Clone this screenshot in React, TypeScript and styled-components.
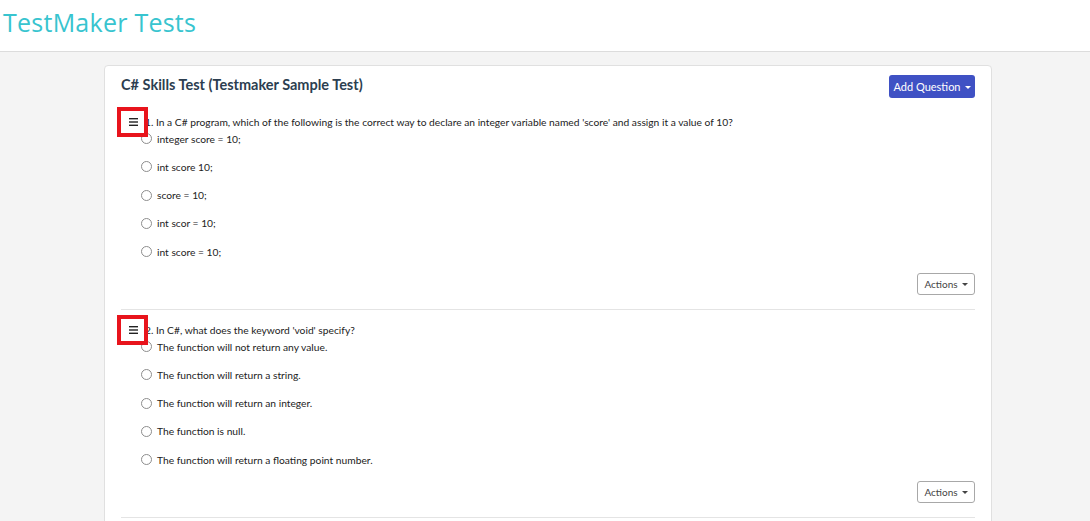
import React from "react";
import styled, { createGlobalStyle } from "styled-components";

const GlobalStyle = createGlobalStyle`
  html, body { margin: 0; padding: 0; }
  body {
    background: #f4f4f4;
    font-family: Lato, "Open Sans", Arial, sans-serif;
    color: #333;
  }
  * { box-sizing: border-box; }
`;

const Header = styled.header`
  height: 52px;
  background: #fff;
  border-bottom: 1px solid #dcdcdc;
  display: flex;
  align-items: center;
  padding-left: 3px;
`;

const Brand = styled.h1`
  margin: -7px 0 0 0;
  font-family: "Open Sans", Arial, sans-serif;
  font-weight: 400;
  font-size: 25px;
  color: #38c4cf;
  letter-spacing: 0.25px;
`;

const Main = styled.main`
  padding: 13px 0 0 104px;
`;

const Card = styled.section`
  width: 888px;
  background: #fff;
  border: 1px solid #e0e0e0;
  border-radius: 4px;
  padding: 9px 16px 20px 16px;
`;

const CardHeader = styled.div`
  display: flex;
  align-items: center;
  justify-content: space-between;
  height: 23px;
  margin-bottom: 15px;
`;

const Title = styled.h2`
  margin: 0 0 5px 0;
  font-size: 14.5px;
  font-weight: 700;
  color: #2c3e50;
`;

const Caret = styled.span`
  display: inline-block;
  width: 0;
  height: 0;
  margin-left: 4px;
  border-top: 3.5px solid currentColor;
  border-left: 3px solid transparent;
  border-right: 3px solid transparent;
  vertical-align: 2px;
`;

const PrimaryButton = styled.button`
  height: 23px;
  width: 86px;
  padding: 0;
  border: none;
  border-radius: 3px;
  background: #3f51c4;
  color: #fff;
  font-family: inherit;
  font-size: 11px;
  cursor: pointer;
`;

const OutlineButton = styled.button`
  height: 22px;
  width: 58px;
  padding: 0;
  border: 1px solid #a8a8a8;
  border-radius: 3px;
  background: #fff;
  color: #444;
  font-family: inherit;
  font-size: 10px;
  cursor: pointer;
`;

const Question = styled.div<{ $first?: boolean }>`
  padding-top: ${(p) => (p.$first ? 0 : 11)}px;
  padding-bottom: 14px;
  border-bottom: 1px solid #e4e4e4;
`;

const QuestionTitle = styled.div`
  display: flex;
  align-items: center;
  height: 17px;
  font-size: 10.25px;
  color: #222;
`;

const Handle = styled.span`
  position: relative;
  width: 24px;
  height: 17px;
  display: flex;
  align-items: center;
  justify-content: center;
  padding-left: 1px;
  flex-shrink: 0;
`;

const Highlight = styled.span`
  position: absolute;
  left: -4px;
  right: -3px;
  top: -6px;
  bottom: -7px;
  border: 4px solid #e8141c;
  pointer-events: none;
`;

const Options = styled.div`
  display: flex;
  flex-direction: column;
  gap: 11.25px;
`;

const Option = styled.label`
  display: flex;
  align-items: center;
  height: 17px;
  padding-left: 20px;
  font-size: 10.25px;
  color: #222;
`;

const Radio = styled.span`
  width: 11px;
  height: 11px;
  border: 1px solid #8d8d8d;
  border-radius: 50%;
  margin-right: 5px;
  flex-shrink: 0;
  background: #fff;
`;

const ActionsRow = styled.div`
  display: flex;
  justify-content: flex-end;
  margin-top: 13px;
`;

const HamburgerIcon = () => (
  <svg width="9" height="8" viewBox="0 0 9 8">
    <rect x="0" y="0" width="9" height="1.4" fill="#222" />
    <rect x="0" y="3.3" width="9" height="1.4" fill="#222" />
    <rect x="0" y="6.6" width="9" height="1.4" fill="#222" />
  </svg>
);

const questions = [
  {
    text:
      "1. In a C# program, which of the following is the correct way to declare an integer variable named 'score' and assign it a value of 10?",
    options: [
      "integer score = 10;",
      "int score 10;",
      "score = 10;",
      "int scor = 10;",
      "int score = 10;",
    ],
  },
  {
    text: "2. In C#, what does the keyword 'void' specify?",
    options: [
      "The function will not return any value.",
      "The function will return a string.",
      "The function will return an integer.",
      "The function is null.",
      "The function will return a floating point number.",
    ],
  },
];

export default function App() {
  return (
    <>
      <GlobalStyle />
      <Header>
        <Brand>TestMaker Tests</Brand>
      </Header>
      <Main>
        <Card>
          <CardHeader>
            <Title>C# Skills Test (Testmaker Sample Test)</Title>
            <PrimaryButton>
              Add Question<Caret />
            </PrimaryButton>
          </CardHeader>
          {questions.map((q, i) => (
            <Question key={i} $first={i === 0}>
              <QuestionTitle>
                <Handle>
                  <HamburgerIcon />
                  <Highlight />
                </Handle>
                <span>{q.text}</span>
              </QuestionTitle>
              <Options>
                {q.options.map((o) => (
                  <Option key={o}>
                    <Radio />
                    {o}
                  </Option>
                ))}
              </Options>
              <ActionsRow>
                <OutlineButton>
                  Actions<Caret />
                </OutlineButton>
              </ActionsRow>
            </Question>
          ))}
        </Card>
      </Main>
    </>
  );
}
